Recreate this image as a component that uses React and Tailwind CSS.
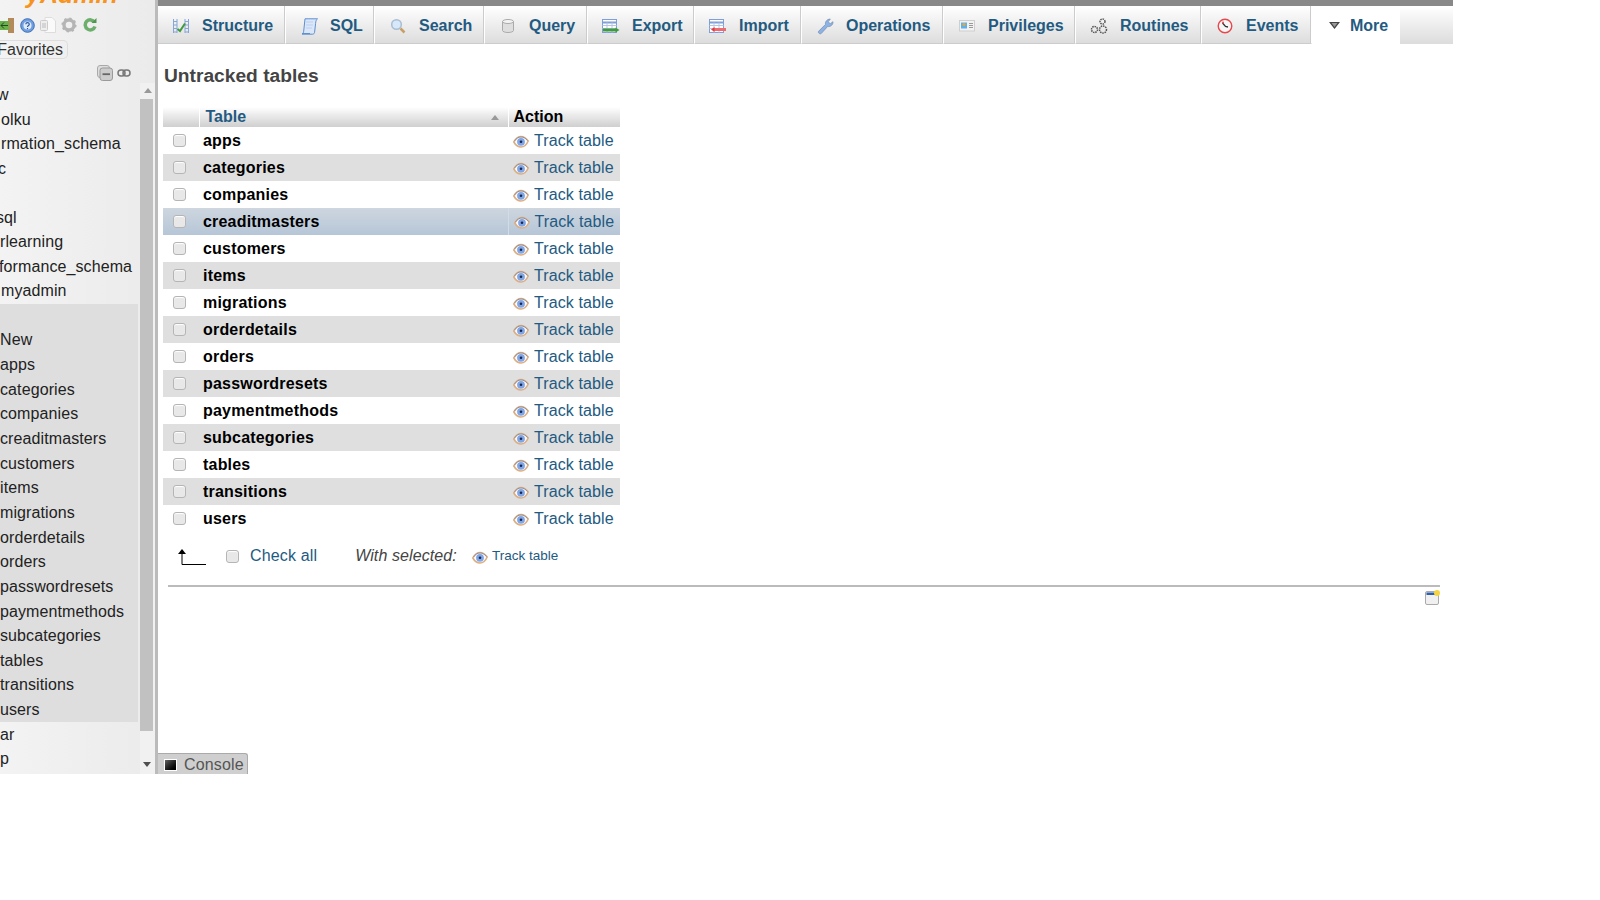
import React from "react";

const Eye = () => (
  <svg width="16" height="13" viewBox="0 0 16 13" className="shrink-0">
    <path d="M0.8 7C3 3 5.500 1.500 8 1.500S13 3 15.200 6C13.500 10 10.500 12 8 12S2.800 10.500 0.800 7Z" fill="#fbfbff" stroke="#dcae84" strokeWidth="1.600" />
    <path d="M1.500 6C3.500 3 5.500 2 8 2s4.500 1 6.500 3.500" fill="none" stroke="#8a8f9c" strokeWidth=".9" />
    <circle cx="8" cy="6.800" r="3.900" fill="#7fa5e4" />
    <circle cx="8" cy="6.800" r="1.300" fill="#1b2752" />
  </svg>
);

const Check = () => (
  <span className="block h-[13px] w-[13px] rounded-[3px] border border-[#b5b5b5] bg-[#e8e8e8] shadow-[inset_0_1px_1px_#fff]" />
);

const TableGlyph = ({ children }) => (
  <svg width="18" height="16" viewBox="0 0 18 16" className="overflow-visible">
    <rect x=".5" y="1.500" width="14" height="13" fill="#fff" stroke="#7f9fd6" />
    <path d="M.5 4.500h14" stroke="#7f9fd6" strokeWidth="2" />
    <path d="M.5 7.500h14M.5 10.500h14M5 4.500v10M10 4.500v10" stroke="#b5c6e4" strokeWidth="1" fill="none" />
    {children}
  </svg>
);

const icons = {
  structure: (
    <svg width="18" height="16" viewBox="0 0 18 16" className="overflow-visible">
      <path d="M1.500 1v14M5 1v14M13 1v14M16.500 1v14M1 3.500h4M1 7h4M1 10.500h4M1 14h4M13 3.500h4M13 7h4M13 10.500h4M13 14h4" stroke="#86a5d8" fill="none" />
      <path d="M5.500 11l2.500 2 5-7.500" stroke="#3f9a3f" strokeWidth="2" fill="none" />
    </svg>
  ),
  sql: (
    <svg width="17" height="17" viewBox="0 0 17 17" className="overflow-visible">
      <path d="M4 .800h12.500c-1.400 1-1.700 2.500-1.900 4.500l-1 9c-.2 1.200-1 1.900-2 1.900H1c1-.5 1.500-1.500 1.700-3L4 .800Z" fill="#dbe7f8" stroke="#5f8fd0" />
      <path d="M1 15.500h8" stroke="#5f8fd0" />
      <path d="M5 4h7M5 7h7M5 10h6" stroke="#b9cff0" />
    </svg>
  ),
  search: (
    <svg width="16" height="16" viewBox="0 0 16 16">
      <circle cx="6.500" cy="6.500" r="4.800" fill="#d6e8fa" stroke="#a9bdd2" strokeWidth="1.500" />
      <path d="M10.500 10.500l4 4" stroke="#c9a063" strokeWidth="2.500" />
    </svg>
  ),
  query: (
    <svg width="12" height="14" viewBox="0 0 12 14">
      <path d="M.5 2.500v9c0 1.100 2.500 2 5.500 2s5.500-.9 5.500-2v-9" fill="#dedede" stroke="#aaa" />
      <ellipse cx="6" cy="2.500" rx="5.500" ry="2" fill="#f4f4f4" stroke="#aaa" />
    </svg>
  ),
  export: (
    <TableGlyph>
      <path d="M1 12h13" stroke="#3e9a3e" strokeWidth="3" />
      <path d="M13.500 9.500L17.500 12l-4 2.500Z" fill="#3e9a3e" />
    </TableGlyph>
  ),
  import: (
    <TableGlyph>
      <path d="M4 11.500h13" stroke="#ee6a6e" strokeWidth="3" fill="none" />
      <path d="M5.500 9L2 11.500 5.500 14Z" fill="#e8383c" />
    </TableGlyph>
  ),
  ops: (
    <svg width="17" height="17" viewBox="0 0 16 16" className="overflow-visible">
      <path d="M1.500 12.500L8 6c-.5-2.500 1.500-5 4.500-5l-2 2.500 2 2L15 3.500c.3 3-2.500 5-5 4.500l-6 6.500c-1.200 1.200-3.500-.8-2.500-2Z" fill="#8eb2e6" stroke="#7a94b8" strokeWidth=".8" />
    </svg>
  ),
  priv: (
    <svg width="16" height="12" viewBox="0 0 16 12">
      <rect x=".5" y=".5" width="15" height="10.500" fill="#f2f2f2" stroke="#cfcfcf" />
      <rect x="2" y="2.500" width="6" height="6" fill="#5db0ea" />
      <circle cx="5" cy="4.500" r="1.500" fill="#e8a63c" />
      <path d="M10 3.500h4M10 5.500h4M10 7.500h4" stroke="#999" />
    </svg>
  ),
  routines: (
    <svg width="17" height="17" viewBox="0 0 17 17" fill="none" stroke="#555" className="overflow-visible">
      <circle cx="11.500" cy="3.500" r="2.500" strokeDasharray="1.500 .8" strokeWidth="1.500" />
      <circle cx="3.500" cy="11.500" r="3" strokeDasharray="1.500 .8" strokeWidth="1.500" />
      <circle cx="12" cy="11.500" r="3.500" strokeDasharray="1.500 .8" strokeWidth="1.500" />
    </svg>
  ),
  events: (
    <svg width="16" height="16" viewBox="0 0 16 16">
      <circle cx="8" cy="8" r="6.800" fill="#f6f6f6" stroke="#e8484c" strokeWidth="1.400" />
      <path d="M5.500 5L8.500 8.500 11 9" stroke="#333" strokeWidth="1.300" fill="none" />
      <circle cx="6" cy="4.500" r="1" fill="#e8484c" />
    </svg>
  ),
  more: (
    <svg width="11" height="7" viewBox="0 0 11 7">
      <path d="M0 0h11L5.500 7Z" fill="#444" />
      <path d="M2.500 1h6L5.500 5Z" fill="#999" />
    </svg>
  ),
};

const tabs = [
  ["Structure", "structure", "w-[128px]"],
  ["SQL", "sql", "w-[89px]"],
  ["Search", "search", "w-[110px]"],
  ["Query", "query", "w-[103px]"],
  ["Export", "export", "w-[107px]"],
  ["Import", "import", "w-[107px]"],
  ["Operations", "ops", "w-[142px]"],
  ["Privileges", "priv", "w-[132px]"],
  ["Routines", "routines", "w-[126px]"],
  ["Events", "events", "w-[110px]"],
];

const tables = ["apps", "categories", "companies", "creaditmasters", "customers", "items", "migrations", "orderdetails", "orders", "passwordresets", "paymentmethods", "subcategories", "tables", "transitions", "users"];

const topDbs = [
  ["w", "-ml-[3px]"],
  ["olku", "ml-[1px]"],
  ["rmation_schema", "ml-[1px]"],
  ["c", "-ml-[2px]"],
  ["\u00a0", "ml-0"],
  ["sql", "-ml-[4px]"],
  ["rlearning", "ml-0"],
  ["formance_schema", "-ml-[1px]"],
  ["myadmin", "ml-[1px]"],
];

const Row = ({ children, h = "h-[24.65px]" }) => (
  <div className={`flex items-center whitespace-nowrap tracking-[0.1px] ${h}`}>{children}</div>
);

export default function App() {
  return (
    <div className="relative flex h-[774px] w-full overflow-hidden bg-white font-['Liberation_Sans',Arial,sans-serif] text-[16px] text-black">
      {/* navigation */}
      <aside className="flex h-full w-[155px] shrink-0 flex-col overflow-hidden bg-gradient-to-r from-[#f3f3f3] to-[#ebebeb] text-[#222]">
        <div className="-mt-[19px] ml-[26px] h-[26px] whitespace-nowrap text-[25px] font-bold italic leading-[26px] text-[#f7931e]">yAdmin</div>
        <div className="mt-[10px] flex h-[16px] items-center">
          <svg width="14" height="16" viewBox="0 0 14 16">
            <rect x="8" y="1" width="6" height="15" fill="#b58a5a" />
            <rect x="0" y="4" width="9" height="9" fill="#6ab04c" />
            <path d="M1 8.500h7M1 8.500l3-3M1 8.500l3 3" stroke="#1f4d1f" fill="none" />
          </svg>
          <svg width="15" height="15" viewBox="0 0 15 15" className="ml-[6px]">
            <circle cx="7.500" cy="7.500" r="6.800" fill="#6f9ee0" stroke="#3e6fb8" />
            <circle cx="7.500" cy="7.500" r="4" fill="#dfeafa" />
            <path d="M5.800 6.200c0-2.200 3.500-2.200 3.500 0 0 1.300-1.800 1.300-1.800 2.800M7.500 10v1.200" stroke="#2f5aa0" strokeWidth="1.200" fill="none" />
          </svg>
          <svg width="16" height="16" viewBox="0 0 16 16" className="ml-[5px]">
            <path d="M5 .5h7l3.500 3.500v11.500H5Z" fill="#fafafa" stroke="#ddd" />
            <rect x=".5" y="3.500" width="7" height="10" rx="1" fill="#eee" stroke="#ccc" />
            <path d="M3 6v5M5 6v5" stroke="#bbb" />
          </svg>
          <svg width="16" height="16" viewBox="0 0 16 16" className="ml-[5px]">
            <circle cx="8" cy="8" r="5" fill="none" stroke="#b5b5b5" strokeWidth="3.400" />
            <circle cx="8" cy="8" r="6.600" fill="none" stroke="#b5b5b5" strokeWidth="2" strokeDasharray="2.300 2.900" />
          </svg>
          <svg width="14" height="14" viewBox="0 0 14 14" className="ml-[6px]">
            <path d="M11.500 4.200A5 5 0 1 0 12 8.500" fill="none" stroke="#6cae6c" strokeWidth="3.500" />
            <path d="M8.500 5h5V0Z" fill="#4f984f" />
          </svg>
        </div>
        <div className="mt-[7px] flex h-[19px] w-[68px] items-center justify-end rounded-r-[5px] border border-l-0 border-[#ddd] pr-[4px] text-[#333]">
          <span className="leading-none">Favorites</span>
        </div>
        <div className="mt-[6px] flex h-[16px] justify-end pr-[24px]">
          <svg width="16" height="16" viewBox="0 0 16 16">
            <rect x=".5" y=".5" width="12" height="12" rx="2.500" fill="#ddd" stroke="#aaa" />
            <rect x="3" y="3" width="12.500" height="12.500" rx="2.500" fill="#ccc" stroke="#999" />
            <path d="M5.500 9.200h7.500" stroke="#666" strokeWidth="1.800" />
          </svg>
          <svg width="14" height="8" viewBox="0 0 14 8" className="ml-[4px] mt-[4px]">
            <rect x="1" y="1" width="7" height="6" rx="3" fill="none" stroke="#777" strokeWidth="1.500" />
            <rect x="6" y="1" width="7" height="6" rx="3" fill="none" stroke="#777" strokeWidth="1.500" />
          </svg>
        </div>
        <div className="mt-[2px] flex min-h-0 flex-1">
          <div className="w-[138px] shrink-0">
            {topDbs.map(([t, m], i) => (
              <Row key={i} h="h-[24.5px]"><span className={m}>{t}</span></Row>
            ))}
            <div className="bg-[#dedede]">
              <Row>{"\u00a0"}</Row>
              <Row>New</Row>
              {tables.map((t) => (
                <Row key={t}>{t}</Row>
              ))}
            </div>
            <Row><span>ar</span></Row>
            <Row><span>p</span></Row>
          </div>
          <div className="ml-[2px] flex w-[15px] flex-col items-center bg-[#f1f1f1]">
            <svg width="8" height="5" viewBox="0 0 8 5" className="mt-[5px]"><path d="M0 5h8L4 0Z" fill="#999" /></svg>
            <div className="-ml-[2px] mt-[6px] h-[632px] w-[13px] shrink-0 bg-[#c1c1c1]" />
            <svg width="8" height="5" viewBox="0 0 8 5" className="-ml-[2px] mt-[31px] shrink-0"><path d="M0 0h8L4 5Z" fill="#505050" /></svg>
          </div>
        </div>
      </aside>
      <div className="w-[3px] shrink-0 bg-[#bbb]" />

      {/* page */}
      <main className="w-[1295px] shrink-0">
        <div className="h-[6px] bg-[#888]" />
        <nav className="flex h-[38px] bg-gradient-to-b from-white to-[#dcdcdc]">
          {tabs.map(([label, icon, w]) => (
            <div key={label} className={`flex h-full items-center border-r border-b border-r-white border-b-[#ccc] pt-[3px] shadow-[inset_-1px_0_0_#ccc] ${w}`}>
              <span className="ml-[15px] flex w-[16px] shrink-0 justify-center">{icons[icon]}</span>
              <span className="ml-[13px] font-bold text-[#235a81]">{label}</span>
            </div>
          ))}
          <div className="flex h-full w-[88px] items-center bg-white pt-[1px]">
            <span className="ml-[17px] flex w-[11px]">{icons.more}</span>
            <span className="ml-[10px] font-bold text-[#235a81]">More</span>
          </div>
        </nav>
        <div className="pl-[5px]">
          <h2 className="ml-[1px] mt-[20px] text-[19.2px] font-bold leading-[24px] text-[#444]">Untracked tables</h2>
          <table className="mt-[19px] w-[457px] border-collapse table-fixed">
            <colgroup>
              <col className="w-[36px]" />
              <col className="w-[309px]" />
              <col className="w-[112px]" />
            </colgroup>
            <thead>
              <tr className="h-[20px] bg-gradient-to-b from-white to-[#cfcfcf] text-left leading-[20px]">
                <th className="border-r border-white p-0" />
                <th className="border-r border-white p-0 pl-[6px] font-bold text-[#235a81]">
                  <div className="flex items-center justify-between pr-[9px]">
                    <span>Table</span>
                    <svg width="8" height="5" viewBox="0 0 8 5"><path d="M0 5h8L4 0Z" fill="#999" /></svg>
                  </div>
                </th>
                <th className="p-0 pl-[5px] font-bold">Action</th>
              </tr>
            </thead>
            <tbody>
              {tables.map((t, i) => {
                const bg = t === "creaditmasters"
                  ? "bg-gradient-to-b from-[#ced6df] to-[#b6c6d7]"
                  : i % 2 === 1 ? "bg-[#dfdfdf]" : "bg-white";
                return (
                  <tr key={t} className={`h-[27px] ${bg}`}>
                    <td className="p-0 pl-[10px]"><Check /></td>
                    <td className="p-0 pl-[4px] font-bold tracking-[0.2px]">{t}</td>
                    <td className={`p-0 pl-[5px] ${t === "creaditmasters" ? "border-l border-[#d3dce6]" : ""}`}>
                      <span className="flex items-center text-[#235a81]">
                        <span className="mt-[2px]"><Eye /></span>
                        <span className="ml-[5px] tracking-[0.1px]">Track table</span>
                      </span>
                    </td>
                  </tr>
                );
              })}
            </tbody>
          </table>
          <div className="flex h-[48px] items-center">
            <svg width="28" height="16" viewBox="0 0 28 16" className="ml-[15px] mt-[1px] shrink-0">
              <path d="M4 15.500h24M4 15.500V4" stroke="#000" fill="none" />
              <path d="M0 5L4 0l4 5Z" fill="#000" />
            </svg>
            <span className="ml-[20px]"><Check /></span>
            <span className="ml-[11px] tracking-[0.15px] text-[#235a81]">Check all</span>
            <span className="ml-[38px] italic tracking-[0.1px] text-[#444]">With selected:</span>
            <span className="ml-[15px] mt-[2px]"><Eye /></span>
            <span className="ml-[4px] text-[13.5px] text-[#235a81]">Track table</span>
          </div>
          <div className="ml-[5px] mr-[13px] mt-[5px] h-[2px] bg-[#bbb]" />
          <div className="mr-[13px] mt-[3px] flex justify-end">
            <svg width="15" height="15" viewBox="0 0 15 15">
              <rect x=".5" y="1.500" width="13" height="13" rx="1.500" fill="#f0f0f0" stroke="#aaa" />
              <rect x="1.500" y="2.500" width="11" height="2.500" fill="#2f5fa8" />
              <circle cx="12" cy="3" r="3" fill="#f5d442" />
            </svg>
          </div>
        </div>
      </main>

      {/* console tab lying over the page */}
      <div className="absolute left-[158px] top-[753px] flex h-[21px] w-[90px] items-center rounded-tr-[3px] border-t border-r border-[#aaa] bg-[#cfcfcf] pt-[1px]">
        <span className="ml-[6px] block h-[12px] w-[13px] border border-white bg-gradient-to-br from-[#666] to-black" />
        <span className="ml-[7px] tracking-[0.15px] text-[#555]">Console</span>
      </div>
    </div>
  );
}
